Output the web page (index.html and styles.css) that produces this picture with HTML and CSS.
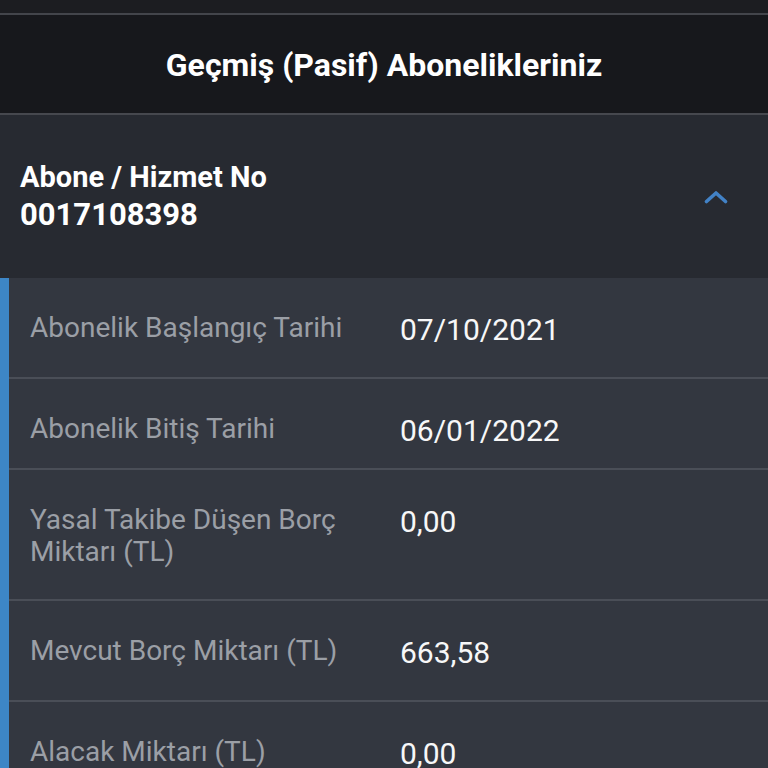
FILE: index.html
```html
<!DOCTYPE html>
<html lang="tr">
<head>
<meta charset="utf-8">
<title>Geçmiş (Pasif) Abonelikleriniz</title>
<link rel="stylesheet" href="styles.css">
</head>
<body>
<div class="topbar"></div>
<header class="title-bar">
  <h1 class="title">Geçmiş (Pasif) Abonelikleriniz</h1>
</header>
<section class="sub">
  <div class="sub-head">
    <div class="sub-id">
      <div class="sub-label">Abone / Hizmet No</div>
      <div class="sub-no">0017108398</div>
    </div>
    <svg class="chevron" width="24" height="14" viewBox="0 0 24 14" aria-hidden="true">
      <polyline points="2.5,11.5 12,3 21.5,11.5" fill="none" stroke="#4282c6" stroke-width="3.6" stroke-linecap="round" stroke-linejoin="round"/>
    </svg>
  </div>
  <div class="sub-body">
    <div class="row">
      <div class="label">Abonelik Başlangıç Tarihi</div>
      <div class="value">07/10/2021</div>
    </div>
    <div class="row row-compact">
      <div class="label">Abonelik Bitiş Tarihi</div>
      <div class="value">06/01/2022</div>
    </div>
    <div class="row">
      <div class="label">Yasal Takibe Düşen Borç Miktarı (TL)</div>
      <div class="value">0,00</div>
    </div>
    <div class="row">
      <div class="label">Mevcut Borç Miktarı (TL)</div>
      <div class="value">663,58</div>
    </div>
    <div class="row">
      <div class="label">Alacak Miktarı (TL)</div>
      <div class="value">0,00</div>
    </div>
  </div>
</section>
</body>
</html>
```
FILE: styles.css
```css
html, body {
  margin: 0;
  padding: 0;
}
body {
  background: #333740;
  font-family: Roboto, "Noto Sans", "Liberation Sans", sans-serif;
  color: #f4f5f7;
  overflow: hidden;
}
.topbar {
  height: 13px;
  background: #1c1d21;
  border-bottom: 2px solid #43454b;
}
.title-bar {
  height: 98px;
  background: #17181c;
  border-bottom: 2px solid #46484e;
  display: flex;
  align-items: center;
  justify-content: center;
}
.title {
  margin: 2px 0 0 0;
  font-size: 32px;
  font-weight: 700;
  color: #ffffff;
}
.sub-head {
  height: 163px;
  background: #272a31;
  display: flex;
  align-items: center;
  justify-content: space-between;
  padding: 0 40px 0 20px;
}
.sub-id {
  display: flex;
  flex-direction: column;
  margin-bottom: 2px;
}
.sub-label,
.sub-no {
  font-size: 29px;
  font-weight: 700;
  line-height: 38px;
  color: #ffffff;
}
.sub-no {
  font-size: 31px;
}
.chevron {
  display: block;
}
.sub-body {
  border-left: 9px solid #3d86c6;
  background: #333740;
}
.row {
  display: grid;
  grid-template-columns: 370px 1fr;
  align-items: start;
  padding: 34px 20px 31px 21px;
  border-bottom: 2px solid #4a4e57;
  line-height: 32px;
}
.row-compact {
  padding-bottom: 21px;
}
.label {
  font-size: 28px;
  color: #9b9fa6;
  padding-right: 20px;
}
.value {
  font-size: 30px;
  color: #f7f7f8;
  padding-top: 2px;
}
```
